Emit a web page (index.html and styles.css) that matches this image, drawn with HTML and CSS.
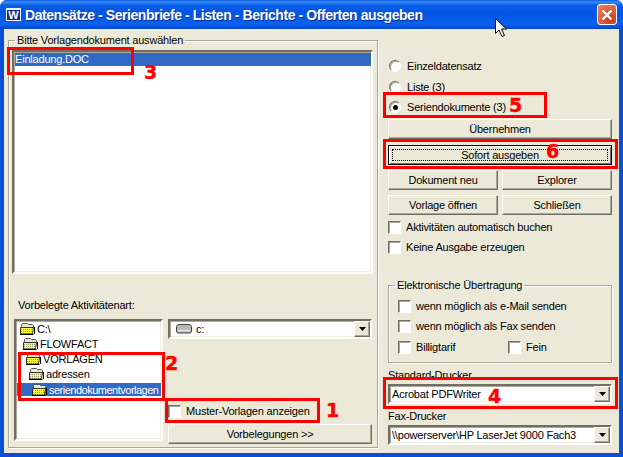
FILE: index.html
```html
<!DOCTYPE html>
<html lang="de">
<head>
  <meta charset="UTF-8" />
  <meta name="viewport" content="width=device-width, initial-scale=1" />
  <title>Datensätze ausgeben</title>
  <link rel="stylesheet" href="styles.css">
</head>
<body>
  <svg class="defs" width="0" height="0">
    <defs>
      <pattern id="dither" width="2" height="2" patternUnits="userSpaceOnUse">
        <rect width="2" height="2" fill="#ffff33" />
        <rect width="1" height="1" fill="#9a9a60" />
      </pattern>
      <symbol id="folder" viewBox="0 0 16 12">
        <path d="M2.500 3.500v-2l1-1h5l1 1h4l1 1v2h-12z" fill="#e8e8d8" stroke="#555" />
        <path d="M1.500 4.500h13l-1 6.500h-12z" fill="url(#dither)" stroke="#333" />
        <path d="M1 11.500h13.500M15.500 4v7" stroke="#000" />
      </symbol>
      <symbol id="arrow" viewBox="0 0 7 4">
        <path d="M0 0h7L3.500 4z" fill="#000" />
      </symbol>
    </defs>
  </svg>

  <div class="window">
    <div class="titlebar">
      <span class="app-icon">W</span>
      <span class="title">Datensätze - Serienbriefe - Listen - Berichte - Offerten ausgeben</span>
      <span class="close">
        <svg width="12" height="12" viewBox="0 0 12 12"><path d="M1.500 1.500l9 9M10.500 1.500l-9 9" stroke="#fff" stroke-width="2.400" /></svg>
      </span>
    </div>

    <div class="client">
      <fieldset class="group main-group">
        <legend>Bitte Vorlagendokument auswählen</legend>
        <div class="listbox sunken">
          <div class="row selected">Einladung.DOC</div>
        </div>
        <div class="art-label">Vorbelegte Aktivitätenart:</div>
        <div class="art-panel">
          <div class="tree sunken">
            <div class="node"><svg class="ico"><use href="#folder" /></svg>C:\</div>
            <div class="node depth1"><svg class="ico"><use href="#folder" /></svg>FLOWFACT</div>
            <div class="node depth2"><svg class="ico"><use href="#folder" /></svg>VORLAGEN</div>
            <div class="node depth3"><svg class="ico"><use href="#folder" /></svg>adressen</div>
            <div class="node depth4 selected"><svg class="ico"><use href="#folder" /></svg><span>seriendokumentvorlagen</span></div>
          </div>
          <div class="art-side">
            <div class="combo sunken">
              <svg class="drive" width="16" height="10" viewBox="0 0 16 10">
                <path d="M2 .5h12l1.500 2v5l-1 1.500H1.500l-1-1.500v-5z" fill="#b8b8b0" stroke="#404040" />
                <path d="M2 6.500h12" stroke="#f0f0f0" />
              </svg>
              <span class="combo-text">c:</span>
              <span class="combo-btn"><svg width="7" height="4"><use href="#arrow" /></svg></span>
            </div>
            <label class="check muster"><span class="box"></span>Muster-Vorlagen anzeigen</label>
            <div class="btn">Vorbelegungen &gt;&gt;</div>
          </div>
        </div>
      </fieldset>

      <div class="side">
        <label class="radio first"><span class="dot"></span>Einzeldatensatz</label>
        <label class="radio"><span class="dot"></span>Liste (3)</label>
        <label class="radio last"><span class="dot on"></span>Seriendokumente (3)</label>

        <div class="btn uebernehmen">Übernehmen</div>
        <div class="btn default"><span class="focus">Sofort ausgeben</span></div>
        <div class="btn-pair">
          <div class="btn">Dokument neu</div>
          <div class="btn">Explorer</div>
        </div>
        <div class="btn-pair">
          <div class="btn">Vorlage öffnen</div>
          <div class="btn">Schließen</div>
        </div>

        <label class="check opt"><span class="box"></span>Aktivitäten automatisch buchen</label>
        <label class="check opt"><span class="box"></span>Keine Ausgabe erzeugen</label>

        <fieldset class="group transfer">
          <legend>Elektronische Übertragung</legend>
          <label class="check"><span class="box"></span>wenn möglich als e-Mail senden</label>
          <label class="check"><span class="box"></span>wenn möglich als Fax senden</label>
          <div class="check check-pair">
            <label class="check"><span class="box"></span>Billigtarif</label>
            <label class="check"><span class="box"></span>Fein</label>
          </div>
        </fieldset>

        <div class="printer-label">Standard-Drucker</div>
        <div class="combo sunken">
          <span class="combo-text">Acrobat PDFWriter</span>
          <span class="combo-btn"><svg width="7" height="4"><use href="#arrow" /></svg></span>
        </div>
        <div class="printer-label fax">Fax-Drucker</div>
        <div class="combo sunken">
          <span class="combo-text">\\powerserver\HP LaserJet 9000 Fach3</span>
          <span class="combo-btn"><svg width="7" height="4"><use href="#arrow" /></svg></span>
        </div>
      </div>
    </div>

    <!-- red annotations drawn over the dialog -->
    <div class="mark mark-1"></div><span class="num num-1">1</span>
    <div class="mark mark-2"></div><span class="num num-2">2</span>
    <div class="mark mark-3"></div><span class="num num-3">3</span>
    <div class="mark mark-4"></div><span class="num num-4">4</span>
    <div class="mark mark-5"></div><span class="num num-5">5</span>
    <div class="mark mark-6"></div><span class="num num-6">6</span>

    <svg class="cursor" width="14" height="21" viewBox="0 0 14 21">
      <path d="M1.500 1.500v15l3.500-3.500 3 6.500 2.500-1-3-6.500h5z" fill="#fff" stroke="#000" />
    </svg>
  </div>
</body>
</html>
```

FILE: styles.css
```css
html,
body {
  margin: 0;
  padding: 0;
  background: #fff;
}

body {
  font-family: "Liberation Sans", Arial, sans-serif;
  font-size: 11px;
  letter-spacing: -0.2px;
  color: #000;
  overflow: hidden;
}

.defs {
  position: absolute;
}

.window {
  position: relative;
  width: 623px;
  height: 457px;
  box-sizing: border-box;
  display: flex;
  flex-direction: column;
  border-radius: 7px 7px 0 0;
  background: #0a4fd8;
  overflow: hidden;
}

/* title bar */
.titlebar {
  height: 29px;
  flex: none;
  display: flex;
  align-items: center;
  padding: 0 6px;
  background: linear-gradient(to bottom, #0a58e0 0, #3a8cf6 2px, #0a5fe8 5px, #0054e3 14px, #0a62f0 24px, #0346c8 29px);
}

.app-icon {
  width: 15px;
  height: 13px;
  box-sizing: border-box;
  border: 1px solid #fff;
  border-top-width: 2px;
  background: #0c2a9a;
  color: #fff;
  font-size: 11px;
  font-weight: bold;
  letter-spacing: 0;
  line-height: 10px;
  text-align: center;
  overflow: hidden;
}

.title {
  flex: 1;
  margin-left: 4px;
  color: #fff;
  font-size: 14px;
  font-weight: bold;
  letter-spacing: -0.43px;
  white-space: nowrap;
  text-shadow: 1px 1px 0 #0a2f8c;
}

.close {
  width: 20px;
  height: 21px;
  box-sizing: border-box;
  display: flex;
  align-items: center;
  justify-content: center;
  border: 1px solid #fff;
  border-radius: 3px;
  background: radial-gradient(circle at 70% 75%, #c5391a, #e4704f 70%, #e98a6e);
}

/* dialog body */
.client {
  flex: 1;
  margin: 0 4px 4px;
  padding: 4px 7px 0 4px;
  box-sizing: border-box;
  background: #ece9d8;
  display: grid;
  grid-template-columns: 370px 224px;
  column-gap: 10px;
}

.group {
  margin: 0;
  padding: 0;
  border: 1px solid #aca899;
  box-shadow: inset 1px 1px 0 #fff, 1px 1px 0 #fff;
  min-width: 0;
}

.group legend {
  padding: 0 2px;
  height: 14px;
  line-height: 14px;
}

.main-group {
  height: 415px;
  box-sizing: border-box;
  padding: 3px 4px 0 3px;
}

.main-group legend {
  margin-left: 3px;
}

.sunken {
  box-sizing: border-box;
  background: #fff;
  border: 2px solid;
  border-color: #716f64 #fff #fff #716f64;
  box-shadow: inset 1px 1px 0 #aca899, inset -1px -1px 0 #f1efe2;
}

.listbox {
  height: 224px;
  padding: 1px 0 0 1px;
}

.row {
  height: 13px;
  line-height: 13px;
}

.selected {
  background: #316ac5;
  color: #fff;
}

.art-label {
  margin: 24px 0 0 6px;
  line-height: 14px;
}

.art-panel {
  margin: 7px 0 0 2px;
  display: flex;
  gap: 5px;
}

.tree {
  width: 149px;
  height: 122px;
  padding: 0 0 0 1px;
  overflow: hidden;
}

.node {
  display: flex;
  align-items: center;
  height: 15px;
  padding-left: 2px;
  white-space: nowrap;
  overflow: hidden;
}

.node span {
  flex: none;
  letter-spacing: -0.5px;
}

.depth1 { padding-left: 5px; }
.depth2 { padding-left: 8px; }
.depth3 { padding-left: 11px; }
.depth4 { padding-left: 14px; height: 13px; margin-top: 2px; }

.ico {
  width: 16px;
  height: 12px;
  flex: none;
  margin-right: 2px;
}

.art-side {
  width: 204px;
  display: flex;
  flex-direction: column;
}

.combo {
  height: 20px;
  display: flex;
  align-items: center;
  padding-left: 2px;
}

.drive {
  margin: 0 4px 0 4px;
}

.combo-text {
  flex: 1;
  white-space: nowrap;
  overflow: hidden;
}

.combo-btn {
  width: 16px;
  height: 16px;
  box-sizing: border-box;
  flex: none;
  display: flex;
  align-items: center;
  justify-content: center;
  background: #ece9d8;
  border: 1px solid;
  border-color: #fff #716f64 #716f64 #fff;
  box-shadow: inset -1px -1px 0 #aca899;
}

.btn {
  height: 20px;
  box-sizing: border-box;
  display: flex;
  align-items: center;
  justify-content: center;
  background: #ece9d8;
  border: 1px solid;
  border-color: #fff #716f64 #716f64 #fff;
  box-shadow: inset -1px -1px 0 #aca899;
  white-space: nowrap;
}

.check,
.radio {
  display: flex;
  align-items: center;
  height: 14px;
  white-space: nowrap;
}

.box {
  width: 13px;
  height: 13px;
  box-sizing: border-box;
  flex: none;
  margin-right: 5px;
  background: #fff;
  border: 1px solid;
  border-color: #716f64 #fff #fff #716f64;
  box-shadow: inset 1px 1px 0 #aca899;
}

.muster {
  margin: 64px 0 0 0;
  height: 16px;
}

.muster + .btn {
  margin-top: 5px;
}

/* right column */
.side {
  display: flex;
  flex-direction: column;
}

.radio {
  margin-top: 7px;
}

.radio.first {
  margin-top: 26px;
}

.radio.last {
  margin-top: 6px;
}

.dot {
  width: 12px;
  height: 12px;
  box-sizing: border-box;
  flex: none;
  margin: 0 6px 0 1px;
  border-radius: 50%;
  background: #fff;
  border: 1px solid;
  border-color: #716f64 #fff #fff #716f64;
  box-shadow: inset 1px 1px 0 #aca899;
  display: flex;
  align-items: center;
  justify-content: center;
}

.dot.on::after {
  content: "";
  width: 5px;
  height: 5px;
  border-radius: 50%;
  background: #000;
}

.uebernehmen {
  margin-top: 5px;
}

.default {
  margin-top: 6px;
  border: 1px solid #000;
  box-shadow: inset 1px 1px 0 #fff, inset -1px -1px 0 #716f64;
  padding: 3px;
}

.focus {
  flex: 1;
  height: 100%;
  display: flex;
  align-items: center;
  justify-content: center;
  box-sizing: border-box;
  border: 1px dotted #000;
}

.btn-pair {
  display: grid;
  grid-template-columns: 110px 110px;
  column-gap: 4px;
  margin-top: 5px;
}

.opt {
  margin-top: 6px;
}

.btn-pair + .opt {
  margin-top: 5px;
}

.transfer {
  height: 85px;
  box-sizing: border-box;
  margin-top: 24px;
  padding: 3px 0 0 9px;
}

.transfer legend {
  margin-left: -3px;
}

.transfer > .check {
  margin-top: 6px;
}

.transfer > label:first-of-type {
  margin-top: 4px;
}

.transfer > .check-pair {
  margin-top: 7px;
}

.check-pair {
  display: grid;
  grid-template-columns: 110px 1fr;
}

.printer-label {
  margin-top: 5px;
  line-height: 14px;
}

.printer-label + .combo {
  margin-top: 2px;
}

.fax {
  margin-top: 5px;
}

/* annotations */
.mark {
  position: absolute;
  box-sizing: border-box;
  border: 3px solid #f00;
}

.mark-1 { left: 165px; top: 398px; width: 155px; height: 25px; }
.mark-2 { left: 18px; top: 352px; width: 147px; height: 49px; }
.mark-3 { left: 7px; top: 47px; width: 127px; height: 28px; }
.mark-4 { left: 383px; top: 377px; width: 235px; height: 32px; }
.mark-5 { left: 383px; top: 92px; width: 164px; height: 26px; }
.mark-6 { left: 383px; top: 139px; width: 235px; height: 30px; }

.num {
  position: absolute;
  color: #f00;
  font-family: "DejaVu Sans", sans-serif;
  font-size: 19px;
  font-weight: bold;
  letter-spacing: 0;
  line-height: 19px;
  -webkit-text-stroke: 0.4px #f00;
}

.num-1 { left: 326px; top: 401px; }
.num-2 { left: 165px; top: 354px; }
.num-3 { left: 144px; top: 63px; }
.num-4 { left: 488px; top: 387px; }
.num-5 { left: 509px; top: 96px; }
.num-6 { left: 546px; top: 142px; }

.cursor {
  position: absolute;
  left: 494px;
  top: 17px;
}
```
